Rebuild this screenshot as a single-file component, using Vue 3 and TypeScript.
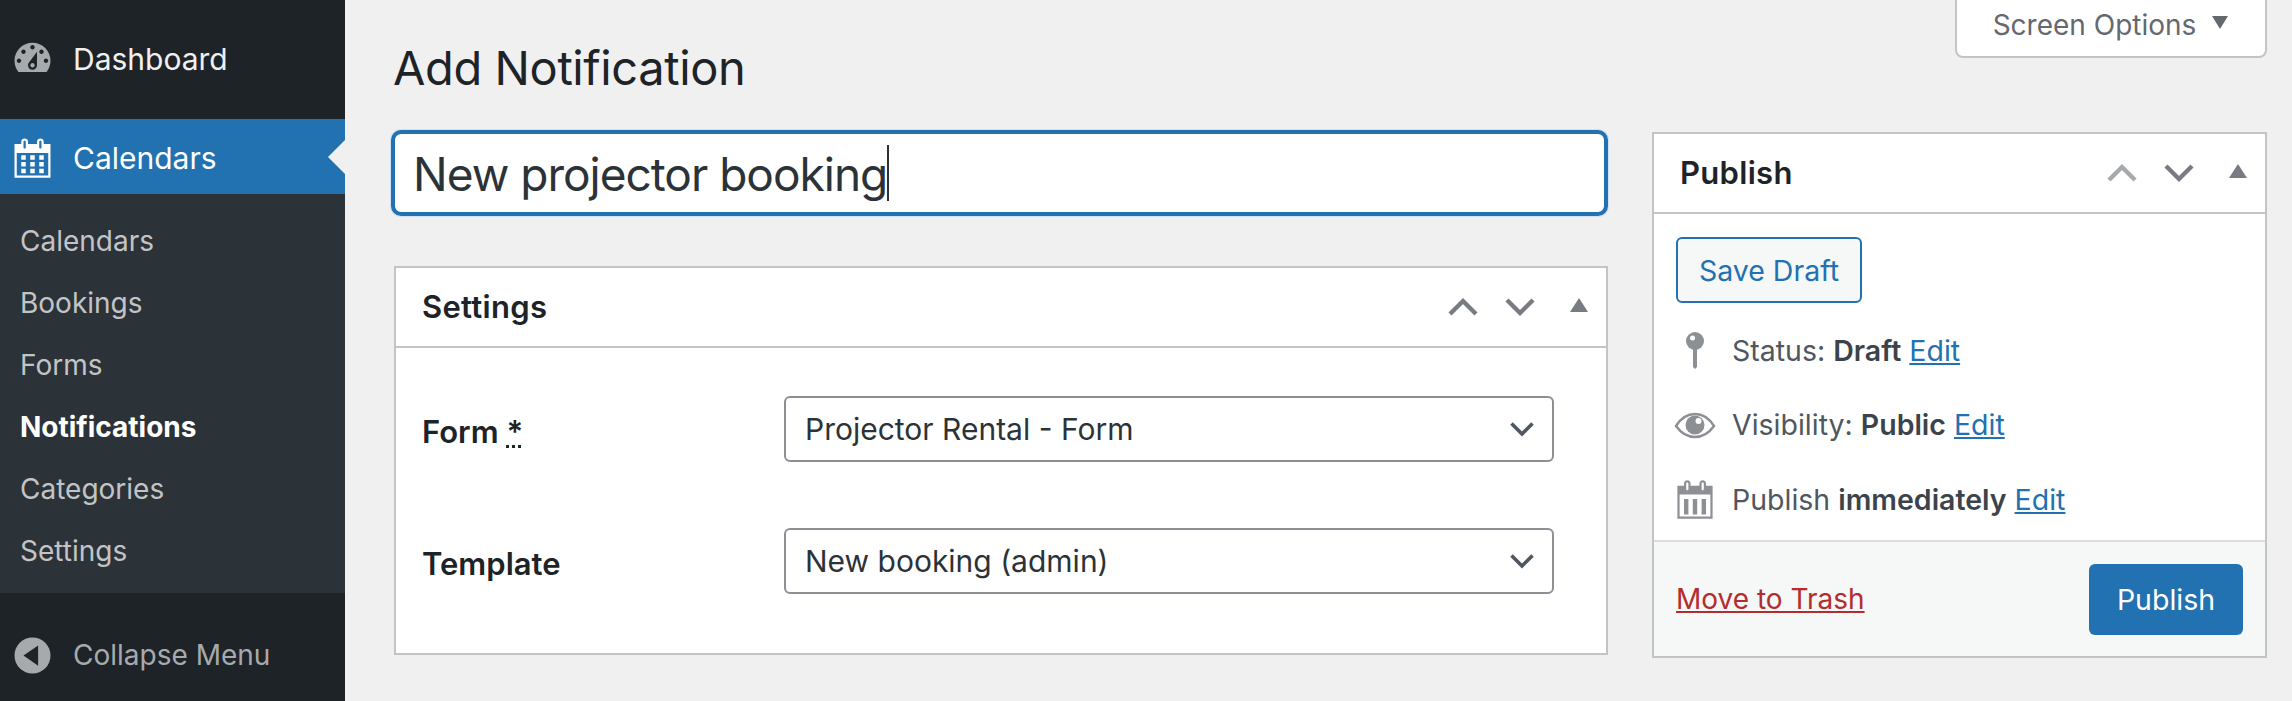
<script setup lang="ts">
const submenu = [
  { label: 'Calendars', current: false },
  { label: 'Bookings', current: false },
  { label: 'Forms', current: false },
  { label: 'Notifications', current: true },
  { label: 'Categories', current: false },
  { label: 'Settings', current: false },
]
const gauge =
  'M3.76 16h12.48c1.1-1.37 1.76-3.11 1.76-5 0-4.42-3.58-8-8-8s-8 3.58-8 8c0 1.89.66 3.63 1.76 5zM10 4c.55 0 1 .45 1 1s-.45 1-1 1-1-.45-1-1 .45-1 1-1zM6 6c.55 0 1 .45 1 1s-.45 1-1 1-1-.45-1-1 .45-1 1-1zm8 0c.55 0 1 .45 1 1s-.45 1-1 1-1-.45-1-1 .45-1 1-1zm-5.37 5.55L12 7v6c0 1.1-.9 2-2 2s-2-.9-2-2c0-.57.24-1.08.63-1.45zM4 10c.55 0 1 .45 1 1s-.45 1-1 1-1-.45-1-1 .45-1 1-1zm12 0c.55 0 1 .45 1 1s-.45 1-1 1-1-.45-1-1 .45-1 1-1zm-5 3c0-.55-.45-1-1-1s-1 .45-1 1 .45 1 1 1 1-.45 1-1z'
const calTop =
  'M15 4h3v15H2V4h3V3c0-.41.15-.76.44-1.06.29-.29.65-.44 1.06-.44s.77.15 1.06.44c.29.3.44.65.44 1.06v1h4V3c0-.41.15-.76.44-1.06.29-.29.65-.44 1.06-.44s.77.15 1.06.44c.29.3.44.65.44 1.06v1zM6 3v2.500c0 .14.05.26.15.36.09.09.21.14.35.14s.26-.05.35-.14c.1-.1.15-.22.15-.36V3c0-.14-.05-.26-.15-.35-.09-.1-.21-.15-.35-.15s-.26.05-.35.15c-.1.09-.15.21-.15.35zm7 0v2.500c0 .14.05.26.14.36.1.09.22.14.36.14s.26-.05.36-.14c.09-.1.14-.22.14-.36V3c0-.14-.05-.26-.14-.35-.1-.1-.22-.15-.36-.15s-.26.05-.36.15c-.09.09-.14.21-.14.35zM17 18V8H3v10z'
const calGrid =
  'M5 9h2v2H5zM9 9h2v2H9zM13 9h2v2h-2zM5 12h2v2H5zM9 12h2v2H9zM13 12h2v2h-2zM5 15h2v2H5zM9 15h2v2H9zM13 15h2v2h-2z'
const calBars = 'M5 10h2v7H5zM9 10h2v7H9zM13 10h2v7h-2z'
</script>

<template>
  <div class="shell">
    <aside class="sidebar">
      <a class="top-item">
        <svg class="menu-icon" viewBox="0 0 20 20"><path :d="gauge" fill="#a7aaad" fill-rule="evenodd" /></svg>
        <span>Dashboard</span>
      </a>
      <a class="top-item active">
        <svg class="menu-icon" viewBox="0 0 20 20">
          <path :d="calTop" fill="#fff" fill-rule="evenodd" />
          <path :d="calGrid" fill="#fff" />
        </svg>
        <span>Calendars</span>
      </a>
      <nav class="submenu">
        <a v-for="item in submenu" :key="item.label" :class="{ current: item.current }">{{ item.label }}</a>
      </nav>
      <a class="collapse">
        <svg class="menu-icon" viewBox="0 0 20 20">
          <circle cx="10" cy="10" r="8" fill="#a7aaad" />
          <path d="M12.500 5.500v9L6 10z" fill="#1d2327" />
        </svg>
        <span>Collapse Menu</span>
      </a>
    </aside>

    <main class="content">
      <div class="meta-row">
        <button class="screen-options">
          <span>Screen Options</span>
          <svg class="so-arrow" viewBox="0 0 18 14"><path d="M1 1h16L9 14z" fill="#646970" /></svg>
        </button>
      </div>
      <h1 class="page-title">Add Notification</h1>
      <div class="columns">
        <div class="col-main">
          <div class="title-input">
            <span>New projector booking</span><i class="caret"></i>
          </div>
          <section class="box">
            <header class="box-head">
              <h2>Settings</h2>
              <div class="handles">
                <svg class="chev" viewBox="0 0 30 20"><path d="M2 17 15 4l13 13" fill="none" stroke="#787c82" stroke-width="4.400" /></svg>
                <svg class="chev" viewBox="0 0 30 20"><path d="M2 3l13 13L28 3" fill="none" stroke="#787c82" stroke-width="4.400" /></svg>
                <svg class="tri" viewBox="0 0 18 14"><path d="M9 0l9 14H0z" fill="#787c82" /></svg>
              </div>
            </header>
            <div class="box-body">
              <div class="field">
                <label>Form <abbr>*</abbr></label>
                <div class="select">
                  <span>Projector Rental - Form</span>
                  <svg class="sel-chev" viewBox="0 0 24 16"><path d="M1.500 2.500 12 13 22.500 2.500" fill="none" stroke="#50575e" stroke-width="3.600" /></svg>
                </div>
              </div>
              <div class="field">
                <label>Template</label>
                <div class="select">
                  <span>New booking (admin)</span>
                  <svg class="sel-chev" viewBox="0 0 24 16"><path d="M1.500 2.500 12 13 22.500 2.500" fill="none" stroke="#50575e" stroke-width="3.600" /></svg>
                </div>
              </div>
            </div>
          </section>
        </div>

        <aside class="col-side">
          <section class="box publish">
            <header class="box-head pub-head">
              <h2>Publish</h2>
              <div class="handles">
                <svg class="chev" viewBox="0 0 30 20"><path d="M2 17 15 4l13 13" fill="none" stroke="#a7aaad" stroke-width="4.400" /></svg>
                <svg class="chev" viewBox="0 0 30 20"><path d="M2 3l13 13L28 3" fill="none" stroke="#787c82" stroke-width="4.400" /></svg>
                <svg class="tri" viewBox="0 0 18 14"><path d="M9 0l9 14H0z" fill="#787c82" /></svg>
              </div>
            </header>
            <div class="pub-body">
              <button class="save-draft">Save Draft</button>
              <div class="pub-rows">
                <div class="pub-row">
                  <svg class="pub-icon" viewBox="0 0 44 44">
                    <circle cx="22" cy="13" r="9" fill="#8c8f94" />
                    <circle cx="19.500" cy="10" r="2.500" fill="#fff" />
                    <path d="M20 19h4v20l-2 2-2-2z" fill="#8c8f94" />
                  </svg>
                  <span>Status: <b>Draft</b> <a>Edit</a></span>
                </div>
                <div class="pub-row">
                  <svg class="pub-icon" viewBox="0 0 44 44">
                    <path d="M3 23C8 15 14 11 22 11s14 4 19 12c-5 7-11 11-19 11S8 30 3 23z" fill="none" stroke="#8c8f94" stroke-width="2.400" />
                    <circle cx="22" cy="22" r="9.500" fill="#8c8f94" />
                    <circle cx="25.500" cy="18" r="3" fill="#fff" />
                  </svg>
                  <span>Visibility: <b>Public</b> <a>Edit</a></span>
                </div>
                <div class="pub-row">
                  <svg class="pub-icon" viewBox="0 0 20 20">
                    <path :d="calTop" fill="#8c8f94" fill-rule="evenodd" />
                    <path :d="calBars" fill="#8c8f94" />
                  </svg>
                  <span>Publish <b>immediately</b> <a>Edit</a></span>
                </div>
              </div>
            </div>
            <footer class="pub-foot">
              <a class="trash">Move to Trash</a>
              <button class="primary">Publish</button>
            </footer>
          </section>
        </aside>
      </div>
    </main>
  </div>
</template>

<style>
html, body { margin: 0; background: #f0f0f1; }
</style>

<style scoped>
.shell {
  display: flex;
  width: 2292px;
  height: 701px;
  overflow: hidden;
  background: #f0f0f1;
  font-family: Inter, "Liberation Sans", sans-serif;
  color: #1d2327;
}
.sidebar {
  width: 345px;
  flex: none;
  display: flex;
  flex-direction: column;
  background: #1d2327;
}
.top-item {
  display: flex;
  align-items: center;
  color: #f0f0f1;
  font-size: 30px;
  height: 119px;
  padding-bottom: 2px;
  box-sizing: border-box;
}
.top-item .menu-icon { margin-left: 10px; margin-right: 18px; }
.menu-icon { width: 45px; height: 45px; flex: none; }
.top-item.active {
  position: relative;
  height: 75px;
  background: #2271b1;
  color: #fff;
  padding: 2px 0 0;
}
.top-item.active::after {
  content: "";
  position: absolute;
  right: 0;
  top: 21px;
  border: 17px solid transparent;
  border-left: 0;
  border-right-color: #f0f0f1;
}
.submenu {
  height: 399px;
  box-sizing: border-box;
  padding-top: 16px;
  background: #2c3338;
  display: flex;
  flex-direction: column;
}
.submenu a {
  height: 62px;
  line-height: 62px;
  padding-left: 20px;
  font-size: 28px;
  color: #c3c4c7;
}
.submenu a.current { color: #fff; font-weight: 700; }
.collapse {
  display: flex;
  align-items: center;
  height: 108px;
  padding-top: 16px;
  box-sizing: border-box;
  color: #a7aaad;
  font-size: 28px;
}
.collapse .menu-icon { margin-left: 10px; margin-right: 18px; }
.content {
  flex: 1;
  min-width: 0;
  padding: 0 25px 0 45px;
}
.meta-row {
  display: flex;
  justify-content: flex-end;
  height: 0;
}
.screen-options {
  display: flex;
  align-items: center;
  justify-content: center;
  gap: 15px;
  width: 312px;
  height: 58px;
  padding: 0 0 6px;
  box-sizing: border-box;
  background: #fff;
  border: 2px solid #c3c4c7;
  border-top: 0;
  border-radius: 0 0 8px 8px;
  color: #646970;
  font: inherit;
  font-size: 28px;
}
.so-arrow { width: 18px; height: 14px; margin-top: -6px; }
.page-title {
  margin: 0;
  padding: 40px 0 0 3px;
  height: 130px;
  box-sizing: border-box;
  font-size: 47px;
  font-weight: 400;
  line-height: 56px;
  letter-spacing: -0.4px;
  color: #1d2327;
}
.columns {
  display: flex;
  gap: 44px;
  align-items: flex-start;
}
.col-main { width: 1218px; flex: none; }
.col-side { width: 615px; flex: none; margin-top: 2px; }
.title-input {
  display: flex;
  align-items: center;
  height: 86px;
  margin-left: 1px;
  box-sizing: border-box;
  padding: 2px 0 0 18px;
  background: #fff;
  border: 4px solid #2271b1;
  border-radius: 10px;
  box-shadow: 0 0 0 1px #cfe0ee;
  font-size: 46px;
  letter-spacing: -1px;
  color: #2c3338;
}
.caret { width: 2px; height: 56px; margin-top: -2px; background: #2c3338; display: block; }
.box {
  background: #fff;
  border: 2px solid #c3c4c7;
  box-sizing: border-box;
}
.col-main .box {
  margin: 50px 0 0 4px;
  height: 389px;
  width: 1214px;
}
.box-head {
  display: flex;
  align-items: center;
  justify-content: space-between;
  height: 78px;
  padding: 0 18px 0 26px;
  border-bottom: 2px solid #c3c4c7;
  box-sizing: content-box;
}
.box-head h2 {
  margin: -1px 0 0;
  font-size: 31px;
  font-weight: 600;
  line-height: 1;
  letter-spacing: 0.3px;
}
.handles { display: flex; align-items: center; gap: 27px; }
.chev { width: 30px; height: 20px; }
.tri { width: 18px; height: 14px; margin-left: 8px; margin-top: -5px; }
.box-body { padding: 48px 0 0 26px; }
.field {
  display: flex;
  align-items: center;
  margin-bottom: 66px;
}
.field label {
  width: 362px;
  font-size: 31px;
  font-weight: 600;
  padding-top: 5px;
}
.field abbr {
  text-decoration: underline dotted;
}
.select {
  display: flex;
  align-items: center;
  justify-content: space-between;
  width: 770px;
  height: 66px;
  box-sizing: border-box;
  padding: 0 18px 0 19px;
  border: 2px solid #8c8f94;
  border-radius: 6px;
  font-size: 30px;
  color: #2c3338;
}
.sel-chev { width: 24px; height: 16px; }
.publish { height: 526px; display: flex; flex-direction: column; }
.pub-head { padding-left: 26px; }
.pub-body { flex: 1; padding: 23px 22px 0; }
.save-draft {
  display: block;
  width: 186px;
  height: 66px;
  box-sizing: border-box;
  background: #f6f7f7;
  border: 2px solid #2271b1;
  border-radius: 6px;
  color: #2271b1;
  font: inherit;
  font-size: 28.500px;
  padding: 0;
}
.pub-rows { margin-top: 10px; display: flex; flex-direction: column; }
.pub-row {
  display: flex;
  align-items: center;
  height: 74.500px;
  font-size: 28.500px;
  color: #50575e;
}
.pub-icon { width: 44px; height: 44px; margin-left: -3px; margin-right: 15px; flex: none; }
.pub-row b { font-weight: 600; color: #3c434a; }
.pub-row a { color: #2271b1; text-decoration: underline; }
.pub-foot {
  display: flex;
  align-items: center;
  justify-content: space-between;
  height: 116px;
  box-sizing: border-box;
  padding: 0 22px;
  background: #f6f7f7;
  border-top: 2px solid #dcdcde;
}
.trash { color: #b32d2e; text-decoration: underline; font-size: 28px; }
.primary {
  width: 154px;
  height: 71px;
  border: 0;
  border-radius: 6px;
  background: #2271b1;
  color: #fff;
  font: inherit;
  font-size: 28.500px;
  padding: 0;
}
</style>
